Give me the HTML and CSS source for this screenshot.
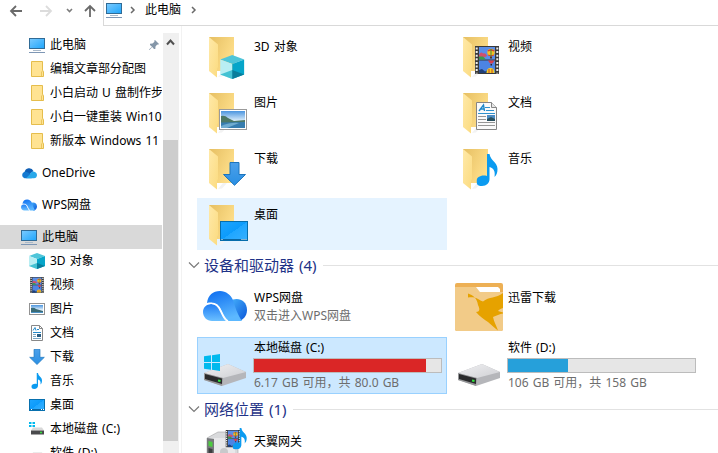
FILE: index.html
```html
<!DOCTYPE html>
<html lang="zh-CN">
  <head>
    <meta charset="UTF-8" />
    <meta name="viewport" content="width=device-width, initial-scale=1.0" />
    <title>此电脑</title>
    <link rel="stylesheet" href="styles.css">
  </head>
  <body>
    <!-- shared icons -->
    <svg class="defs" width="0" height="0">
      <defs>
        <linearGradient id="gScreen" x1="0" y1="0" x2="1" y2="1">
          <stop offset="0" stop-color="#7ccbff" /><stop offset="1" stop-color="#1ea5fb" />
        </linearGradient>
        <linearGradient id="gBack" x1="0" y1="0" x2="1" y2="0.6">
          <stop offset="0" stop-color="#e6bf62" /><stop offset="1" stop-color="#ffe08c" />
        </linearGradient>
        <linearGradient id="gFlap" x1="0" y1="0" x2="1" y2="1">
          <stop offset="0" stop-color="#ffe9a8" /><stop offset="1" stop-color="#fbdb80" />
        </linearGradient>
        <linearGradient id="gCloud" x1="0" y1="0" x2="0.4" y2="1">
          <stop offset="0" stop-color="#0b6cf0" /><stop offset="1" stop-color="#5cb8ff" />
        </linearGradient>
        <linearGradient id="gCloudL" x1="0" y1="0" x2="0" y2="1">
          <stop offset="0" stop-color="#1f7df5" /><stop offset="1" stop-color="#6cc0ff" />
        </linearGradient>
        <linearGradient id="gCloudR" x1="0" y1="0" x2="1" y2="1">
          <stop offset="0" stop-color="#45b0fb" /><stop offset="1" stop-color="#0a55d8" />
        </linearGradient>
        <linearGradient id="gDesk" x1="0" y1="0" x2="1" y2="1">
          <stop offset="0" stop-color="#1ea5ff" /><stop offset="0.5" stop-color="#0c9bfb" />
          <stop offset="0.5" stop-color="#1fa6ff" /><stop offset="1" stop-color="#37b0ff" />
        </linearGradient>
        <linearGradient id="gSky" x1="0" y1="0" x2="0" y2="1">
          <stop offset="0" stop-color="#4b95df" /><stop offset="0.6" stop-color="#e2f1fb" />
        </linearGradient>
        <linearGradient id="gDrive" x1="0" y1="0" x2="1" y2="1">
          <stop offset="0" stop-color="#f0f0f2" /><stop offset="1" stop-color="#cfd0d4" />
        </linearGradient>
        <linearGradient id="gArrow" x1="0" y1="0" x2="0" y2="1">
          <stop offset="0" stop-color="#4ba0ea" /><stop offset="1" stop-color="#2a8fe3" />
        </linearGradient>
      </defs>

      <symbol id="pc" viewBox="0 0 16 16">
        <rect x="0.5" y="1.5" width="15" height="10" fill="url(#gScreen)" stroke="#306b96" />
        <path d="M4 13.5h8" stroke="#a9b9ca" />
        <path d="M0 15.5h16" stroke="#7e97b5" />
      </symbol>
      <symbol id="dir" viewBox="0 0 16 16">
        <path d="M2.5 0.5h11v9l1 1v5h-12z" fill="#ffe392" stroke="#e5bd4c" />
        <path d="M12.5 15v-4l1.5-1.5" fill="none" stroke="#eac65e" />
      </symbol>
      <symbol id="onedrive" viewBox="0 0 16 16">
        <path d="M3.6 7.2A4.6 4.6 0 0 1 12.4 6L8 10z" fill="#0f5fb5" />
        <path d="M3.5 13.3a3.4 3.4 0 0 1 .1-6.5c1.2-.3 2.2 0 3 .5l6 3.600-2 2.400z" fill="#1479d0" />
        <path d="M5 13.300l4-4.100c1-2.300 2.300-2.900 3.400-2.700 2.200.5 3.600 1.600 3.600 3.500 0 2-1.300 3.300-3 3.300H3.200z" fill="#28a8ea" />
      </symbol>
      <symbol id="cloud" viewBox="2 7 44 30">
        <path d="M32 15.500c6-2 14 1 14 10.500 0 6-4 11-10 11-6-5-8-12-4-21.500z" fill="url(#gCloudR)" />
        <path d="M6 19C7 11 12 7 19 7c6 0 11 4 13 9 2 6 4 14 9 21h-14c-4-1-5-8-8-13-3-4-8-6-13-5z" fill="url(#gCloud)" />
        <path d="M2 28c0-5 4-8 8-8 9 0 9 12 15 17H11c-5 0-9-4-9-9z" fill="url(#gCloudL)" />
        <path d="M5.500 20c11-3 13 4 15.500 9 2 4 4 7 6 8" fill="none" stroke="#fff" stroke-width="1.500" />
      </symbol>
      <symbol id="cube" viewBox="0 0 24 24">
        <path d="M0 4.500L12 0l12 4.500L12 9z" fill="#4ec5d9" />
        <path d="M0 4.500L12 9v15L0 19.500z" fill="#b9eef3" />
        <path d="M12 9l12-4.500v15L12 24z" fill="#06a5c9" />
        <path d="M0 19.500L12 15v9z" fill="#44c2d3" />
        <path d="M12 15l12 4.500L12 24z" fill="#087d9b" />
      </symbol>
      <symbol id="film" viewBox="0 0 24 28">
        <rect width="24" height="28" fill="#3a3a3a" />
        <path d="M1.700 1.500v26M22.300 1.500v26" stroke="#ededed" stroke-width="2" stroke-dasharray="2 1.600" />
        <rect x="4" y="1" width="16" height="12.500" fill="#5a8ee8" />
        <rect x="4" y="14.500" width="16" height="12.500" fill="#4c84e4" />
        <path d="M4 9q2-4 4-1.500 3-1 4 2.500l-3 1.500-5-.5z" fill="#d0506c" />
        <path d="M4 10.500h4l3 3H4z" fill="#3a9a4c" />
        <path d="M4 24l3-1 3 2.500 3-1.500v3H4z" fill="#203f77" />
        <circle cx="16" cy="6.500" r="3.700" fill="#f4c223" />
        <path d="M12.800 5q3.200-2 6.400 0M13.200 9q2.800 1.500 5.600 0" fill="none" stroke="#d74233" stroke-width="1.300" />
        <path d="M16 3v7" stroke="#3c8c45" />
        <path d="M15 10.500h2v2h-2z" fill="#59371b" />
        <path d="M13 14.500h6.500l-2 3h-2.500z" fill="#d83d4d" />
        <path d="M15.500 18h1.500v1.500h-1.500z" fill="#302020" />
        <path d="M11.500 27q0-5 4-5t4 5z" fill="#f2cf28" />
        <path d="M14 23v4M17 23v4" stroke="#c94529" />
      </symbol>
      <symbol id="photo" viewBox="0 0 28 21">
        <rect x="0.500" y="0.500" width="27" height="20" fill="#fff" stroke="#9a9a9a" />
        <rect x="2" y="2" width="24" height="17" fill="url(#gSky)" />
        <path d="M2 7q4-1 7 2l6 3 11-1v3H2z" fill="#4c7866" />
        <path d="M2 13.500l24-.5v6H2z" fill="#377daf" />
        <path d="M2 17q10-4 18-3L8 19H2z" fill="#70acd0" />
      </symbol>
      <symbol id="doc" viewBox="0 0 21 28">
        <path d="M0.500 0.500h15l5 5v22h-20z" fill="#fafafa" stroke="#858585" />
        <path d="M15.500 0.500v5h5" fill="#e7e7e7" stroke="#858585" />
        <path d="M3 9l4.500-6 1 6M5 7h3.500" fill="none" stroke="#1b86c9" stroke-width="1.400" />
        <path d="M9 5.500h5M10 8.500h8M2 11.500h17" stroke="#2f91cd" />
        <path d="M2 14.500h8M2 17.500h8M2 20.500h17M2 23.500h17" stroke="#969696" />
        <rect x="11" y="13" width="8" height="6" fill="#4b8bc2" />
        <path d="M11 17l4-2 4 2v2h-8z" fill="#294f5d" />
      </symbol>
      <symbol id="down" viewBox="0 0 24 24">
        <path d="M7.500 0.500h9v12h6.500L12 23.300 1 12.500h6.500z" fill="url(#gArrow)" stroke="#1d75bd" />
      </symbol>
      <symbol id="note" viewBox="0 0 22 32">
        <path d="M10.500 0h2.500c1 7 8 8 8 15 0 4-1 6-3 8 1-6-1-9-5-10v12c0 4-3 7-7.500 7S0 30 0 27c0-4 5-6.500 10.500-5z" fill="#0b9bf0" />
      </symbol>
      <symbol id="desk" viewBox="0 0 28 20">
        <rect x="0.500" y="0.500" width="27" height="19" fill="url(#gDesk)" stroke="#066dac" />
        <path d="M1 18.500h26" stroke="#0b67a3" />
        <path d="M1.500 18.500h1M21.500 18.500h1M23.500 18.500h1M25.500 18.500h1" stroke="#fff" />
      </symbol>
      <symbol id="drive" viewBox="0 0 42 22">
        <path d="M0 9L24 0l18 8v6L18 22 0 16z" fill="#b5b6ba" />
        <path d="M0 9L24 0l18 8-23 6z" fill="url(#gDrive)" />
        <path d="M0 9l19 5-1 8-18-6z" fill="#969799" />
        <path d="M1 10l17 4.500v5.500L1 15z" fill="#292a2c" />
        <path d="M14 16.500l2.500.5" stroke="#31e43d" stroke-width="1.800" />
      </symbol>
      <symbol id="win" viewBox="0 0 16 17">
        <path d="M0 2.300L7 1.300V8H0zM8 1.200L16 0v8H8zM0 9h7v6.700l-7-1zM8 9h8v8l-8-1.200z" fill="#00b9ee" />
      </symbol>
      <symbol id="folder" viewBox="0 0 48 48">
        <path d="M17 44l5-6 4 0-5 5.500z" fill="#f3f3f3" />
        <path d="M8 4h25v34H16L8 34z" fill="url(#gBack)" />
        <path d="M8 4l9 7.500V34l-1 2v8.500L8 38z" fill="url(#gFlap)" />
      </symbol>
    </svg>

    <div class="toolbar">
      <div class="nav-buttons">
        <svg width="103" height="25" viewBox="0 0 103 25" fill="none">
          <path d="M22 11H11M16 6l-5 5 5 5" stroke="#6a6a6a" stroke-width="1.800" />
          <path d="M40 11h11M46 6l5 5-5 5" stroke="#dcdcdc" stroke-width="1.800" />
          <path d="M67 9l2.500 2.500L72 9" stroke="#7c7c7c" stroke-width="1.600" />
          <path d="M90 17V6M85 11l5-5 5 5" stroke="#6a6a6a" stroke-width="1.800" />
        </svg>
      </div>
      <div class="address">
        <svg class="icon16" viewBox="0 0 16 16"><use href="#pc" /></svg>
        <svg class="crumb" viewBox="0 0 6 8"><path d="M1 1l3 3-3 3" /></svg>
        <span>此电脑</span>
        <svg class="crumb last" viewBox="0 0 6 8"><path d="M1 1l3 3-3 3" /></svg>
      </div>
    </div>

    <div class="window">
      <nav class="sidebar">
        <div class="item child">
          <svg class="icon16"><use href="#pc" /></svg><span>此电脑</span>
          <svg class="pin" viewBox="0 0 10 10"><path d="M6 0l4 4-1 .8-.8-.2L6.500 6.500 6.300 9 5 9 3.200 7 .5 10 0 9.500 3 6.800 1 5V3.800l2.500-.3 2-1.800-.3-.9z" fill="#8496a8" /></svg>
        </div>
        <div class="item child"><svg class="icon16"><use href="#dir" /></svg><span>编辑文章部分配图</span></div>
        <div class="item child"><svg class="icon16"><use href="#dir" /></svg><span>小白启动 U 盘制作步</span></div>
        <div class="item child"><svg class="icon16"><use href="#dir" /></svg><span>小白一键重装 Win10</span></div>
        <div class="item child"><svg class="icon16"><use href="#dir" /></svg><span>新版本 Windows 11</span></div>
        <div class="item root"><svg class="icon16"><use href="#onedrive" /></svg><span>OneDrive</span></div>
        <div class="item root"><svg class="icon16"><use href="#cloud" /></svg><span>WPS网盘</span></div>
        <div class="item root current"><svg class="icon16"><use href="#pc" /></svg><span>此电脑</span></div>
        <div class="item child"><svg class="icon16"><use href="#cube" /></svg><span>3D 对象</span></div>
        <div class="item child"><svg class="icon16"><use href="#film" /></svg><span>视频</span></div>
        <div class="item child">
          <svg class="icon16" viewBox="0 0 16 16"><rect x="0.500" y="2.500" width="15" height="11" fill="#fff" stroke="#929292" /><rect x="2" y="4" width="12" height="8" fill="url(#gSky)" /><path d="M2 7q3-1 5 1l7 2v2H2z" fill="#3a6b76" /><path d="M2 11h12v1H2z" fill="#4b91c5" /></svg><span>图片</span>
        </div>
        <div class="item child">
          <svg class="icon16" viewBox="0 0 16 16"><path d="M2.500 0.500h8l3 3v12h-11z" fill="#fff" stroke="#888" /><path d="M10.500 0.500v3h3" fill="none" stroke="#888" /><path d="M4 5.500l2-3 1 3M8 4.500h2M4 7.500h8" fill="none" stroke="#2389ca" /><path d="M4 9.500h3M4 11.500h3M4 13.500h8" stroke="#7ba8c5" /><rect x="8" y="9" width="4" height="3" fill="#285d83" /></svg><span>文档</span>
        </div>
        <div class="item child"><svg class="icon16"><use href="#down" /></svg><span>下载</span></div>
        <div class="item child"><svg class="icon16"><use href="#note" /></svg><span>音乐</span></div>
        <div class="item child">
          <svg class="icon16" viewBox="0 0 16 16"><rect x="0.500" y="2.500" width="15" height="11" fill="url(#gDesk)" stroke="#0870ae" /><path d="M1 12.500h14" stroke="#0b67a3" /><path d="M2 12.500h1M12 12.500h1M14 12.500h1" stroke="#fff" /></svg><span>桌面</span>
        </div>
        <div class="item child">
          <svg class="icon16" viewBox="0 0 16 16"><path d="M0 1h2.500v2H0zM3.500 1H6v2H3.500zM0 4h2.500v2H0zM3.500 4H6v2H3.500z" fill="#00b9ee" /><path d="M4 6.500h9l2 3H2z" fill="#d8d8d8" /><rect x="2" y="9.500" width="13" height="4" fill="#4a4a4c" /><path d="M11 11.500h2" stroke="#34e23d" stroke-width="1.500" /></svg><span>本地磁盘 (C:)</span>
        </div>
        <div class="item child">
          <svg class="icon16" viewBox="0 0 16 16"><path d="M4 7.500h9l2 3H2z" fill="#d8d8d8" /><rect x="2" y="10.500" width="13" height="4" fill="#4a4a4c" /></svg><span>软件 (D:)</span>
        </div>
      </nav>

      <div class="scrollbar">
        <svg class="scroll-up" viewBox="0 0 16 17"><path d="M4 11.500l3.500-4 3.500 4" /></svg>
        <div class="thumb"></div>
      </div>

      <main class="content">
        <div class="grid">
          <div class="tile">
            <svg class="icon48"><use href="#folder" /><use href="#cube" x="19" y="22" width="24.500" height="24" /></svg>
            <div class="info"><div class="name">3D 对象</div></div>
          </div>
          <div class="tile">
            <svg class="icon48"><use href="#folder" /><use href="#film" x="20" y="13" width="24" height="28" /></svg>
            <div class="info"><div class="name">视频</div></div>
          </div>
          <div class="tile">
            <svg class="icon48"><use href="#folder" /><use href="#photo" x="18" y="20" width="28" height="21" /></svg>
            <div class="info"><div class="name">图片</div></div>
          </div>
          <div class="tile">
            <svg class="icon48"><use href="#folder" /><use href="#doc" x="21" y="13" width="21" height="28" /></svg>
            <div class="info"><div class="name">文档</div></div>
          </div>
          <div class="tile">
            <svg class="icon48"><use href="#folder" /><use href="#down" x="21.500" y="17" width="24" height="24" /></svg>
            <div class="info"><div class="name">下载</div></div>
          </div>
          <div class="tile">
            <svg class="icon48"><use href="#folder" /><use href="#note" x="21.500" y="9" width="22" height="32" /></svg>
            <div class="info"><div class="name">音乐</div></div>
          </div>
          <div class="tile hover">
            <svg class="icon48"><use href="#folder" /><use href="#desk" x="19" y="20" width="28" height="20" /></svg>
            <div class="info"><div class="name">桌面</div></div>
          </div>
        </div>

        <div class="group-title">
          <svg class="chevron" viewBox="0 0 12 8"><path d="M1 1.500l5 5 5-5" /></svg>
          <span>设备和驱动器 (4)</span>
        </div>
        <div class="grid">
          <div class="tile">
            <svg class="icon48"><use href="#cloud" x="2" y="7" width="44" height="30" /></svg>
            <div class="info">
              <div class="name">WPS网盘</div>
              <div class="sub">双击进入WPS网盘</div>
            </div>
          </div>
          <div class="tile">
            <svg class="icon48">
              <rect y="-1" width="48" height="48" rx="2" fill="#edb055" />
              <path d="M21 3h22l2 2v4H21z" fill="#fff" />
              <path d="M0 3h21l3.500 4.500Q25 8 26 8h22v37q0 2-2 2H2q-2 0-2-2z" fill="#f2cb88" />
              <path d="M13 13.500c4-.5 8 0 10 1.500 2 1 3 2 5 2.500 6-5 13-3 20-8.500v15c-2 .5-4 1.500-5 3l5 1.500v1c-3 .5-7 2-10 3.500 1 5 3 8 5 13.500-3-2-6-5-10-8.500-4-3-8-5-12-10 4 0 4-3 2-7-1-7-5-10-10-11.500z" fill="#e6a200" />
            </svg>
            <div class="info"><div class="name">迅雷下载</div></div>
          </div>
          <div class="tile disk selected">
            <svg class="icon48"><use href="#drive" x="3" y="24" width="42" height="22" /><use href="#win" x="3" y="14" width="16" height="17" /></svg>
            <div class="info">
              <div class="name">本地磁盘 (C:)</div>
              <div class="bar"><div class="fill full" style="width: 92%"></div></div>
              <div class="sub">6.17 GB 可用，共 80.0 GB</div>
            </div>
          </div>
          <div class="tile disk">
            <svg class="icon48"><use href="#drive" x="3" y="24" width="42" height="22" /></svg>
            <div class="info">
              <div class="name">软件 (D:)</div>
              <div class="bar"><div class="fill" style="width: 32%"></div></div>
              <div class="sub">106 GB 可用，共 158 GB</div>
            </div>
          </div>
        </div>

        <div class="group-title">
          <svg class="chevron" viewBox="0 0 12 8"><path d="M1 1.500l5 5 5-5" /></svg>
          <span>网络位置 (1)</span>
        </div>
        <div class="grid">
          <div class="tile">
            <svg class="icon48">
              <path d="M6 10l11-6h18q2 0 2 2v40H6z" fill="#d9dadc" stroke="#a2a3a5" stroke-width="0.600" />
              <path d="M13 10h21v36H13z" fill="#e8e8ea" />
              <path d="M6 10l7 1v35H6z" fill="#77797c" />
              <path d="M7.500 13l4 1v5l-4-1z" fill="#4ccc3f" />
              <path d="M7.500 20l4 1v25h-4z" fill="#3c3e40" />
              <circle cx="23" cy="24" r="4" fill="#c8c9cb" />
              <use href="#film" x="24.500" y="2" width="15" height="17.500" />
              <use href="#note" x="31.500" y="0" width="15" height="21.500" />
            </svg>
            <div class="info"><div class="name">天翼网关</div></div>
          </div>
        </div>
      </main>
    </div>
  </body>
</html>
```
FILE: styles.css
```css
* {
  box-sizing: border-box;
}

body {
  margin: 0;
  height: 453px;
  overflow: hidden;
  background-color: #fff;
  color: #000;
  font-family: "Noto Sans", "Noto Sans CJK SC", sans-serif;
  font-size: 12px;
  line-height: 18px;
  word-spacing: 1px;
}

svg {
  display: block;
  flex-shrink: 0;
}

.defs {
  position: absolute;
}

.icon16 {
  width: 16px;
  height: 16px;
}

.icon48 {
  width: 48px;
  height: 48px;
  overflow: visible;
}

.toolbar {
  display: flex;
  height: 26px;
}

.nav-buttons {
  width: 103px;
}

.address {
  flex: 1;
  display: flex;
  align-items: center;
  padding: 0 0 5px 2px;
  border-left: 1px solid #d9d9d9;
  border-bottom: 1px solid #d9d9d9;
}

.address span {
  margin-left: 9px;
}

.crumb {
  width: 6px;
  height: 8px;
  margin-left: 8px;
  fill: none;
  stroke: #6a6a6a;
  stroke-width: 1.5;
}

.crumb.last {
  margin-left: 10px;
}

.window {
  display: flex;
  height: 427px;
}

.sidebar {
  width: 162px;
  padding-top: 7px;
  overflow: hidden;
}

.item {
  display: flex;
  align-items: center;
  gap: 5px;
  height: 24px;
  white-space: nowrap;
}

.item.child {
  padding-left: 29px;
}

.item.root {
  margin-top: 8px;
  padding-left: 21px;
}

.item.current {
  background-color: #d9d9d9;
}

.pin {
  width: 10px;
  height: 10px;
  margin: 0 3px 0 auto;
}

.scrollbar {
  width: 16px;
  margin: 7px 2px 0 1px;
  background-color: #f0f0f0;
}

.scroll-up {
  width: 16px;
  height: 17px;
  fill: none;
  stroke: #505050;
  stroke-width: 2;
}

.thumb {
  width: 15px;
  height: 301px;
  margin-top: 90px;
  background-color: #cdcdcd;
}

.content {
  flex: 1;
  padding: 4px 0 0 5px;
  border-left: 1px solid #f2f2f2;
  overflow: hidden;
}

.grid {
  display: grid;
  grid-template-columns: 250px 250px;
  gap: 4px;
  padding-left: 10px;
}

.tile {
  display: flex;
  height: 52px;
  padding: 3px 5px 0 4px;
}

.tile.hover {
  background-color: #e5f3ff;
}

.tile.disk {
  height: 57px;
}

.tile.selected {
  background-color: #cce8ff;
  outline: 1px solid #99d1ff;
  outline-offset: -1px;
}

.info {
  flex: 1;
  padding: 5px 0 0 5px;
}

.sub {
  color: #6d6d6d;
}

.disk .info {
  padding: 0 0 0 4px;
}

.disk .name {
  margin-top: -1px;
  padding-left: 1px;
}

.disk .sub {
  margin-top: 1px;
  padding-left: 1px;
}

.bar {
  height: 15px;
  margin-top: 1px;
  border: 1px solid #bcbcbc;
  background-color: #e6e6e6;
}

.fill {
  height: 100%;
  background-color: #26a0da;
}

.fill.full {
  background-color: #da2626;
}

.group-title {
  display: flex;
  align-items: center;
  height: 31px;
  padding-bottom: 1px;
  color: #1e3287;
  font-size: 15px;
  line-height: 22px;
}

.group-title::after {
  content: "";
  flex: 1;
  height: 1px;
  margin-left: 7px;
  background-color: #e2e2e2;
}

.chevron {
  width: 12px;
  height: 8px;
  margin: 0 4px 0 1px;
  fill: none;
  stroke: #7a7a7a;
  stroke-width: 1.2;
}
```
